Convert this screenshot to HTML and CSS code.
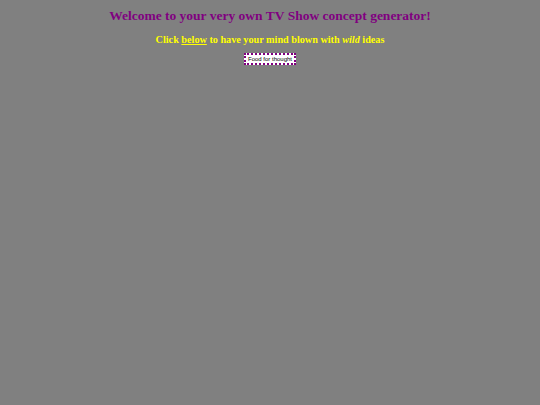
FILE: index.html
```html
<!DOCTYPE html>
<html>
<head>
<meta charset="utf-8">
<link rel="stylesheet" href="styles.css">
</head>
<body>
<h1 class="title">Welcome to your very own TV Show concept generator!</h1>
<p class="sub">Click <u>below</u> to have your mind blown with <i>wild</i> ideas</p>
<div class="actions"><button class="btn">Food for thought</button></div>
</body>
</html>
```
FILE: styles.css
```css
html, body { margin: 0; padding: 0; }
body {
  background: #808080;
  font-family: "Liberation Serif", "Times New Roman", serif;
  text-align: center;
  padding-top: 8px;
}
.title {
  color: #800080;
  font-size: 13.5px;
  font-weight: bold;
  margin: 0;
  line-height: 16px;
}
.sub {
  color: #ffff00;
  font-size: 10.2px;
  font-weight: bold;
  margin: 10px 0 0 0;
  line-height: 12px;
}
.actions { margin-top: 7px; line-height: 0; }
.btn {
  font-family: "Liberation Sans", Arial, sans-serif;
  font-size: 6px;
  line-height: 8px;
  background: #fff;
  color: #000;
  border: 2px dotted #800080;
  padding: 0 2px;
  margin: 0;
}
```
